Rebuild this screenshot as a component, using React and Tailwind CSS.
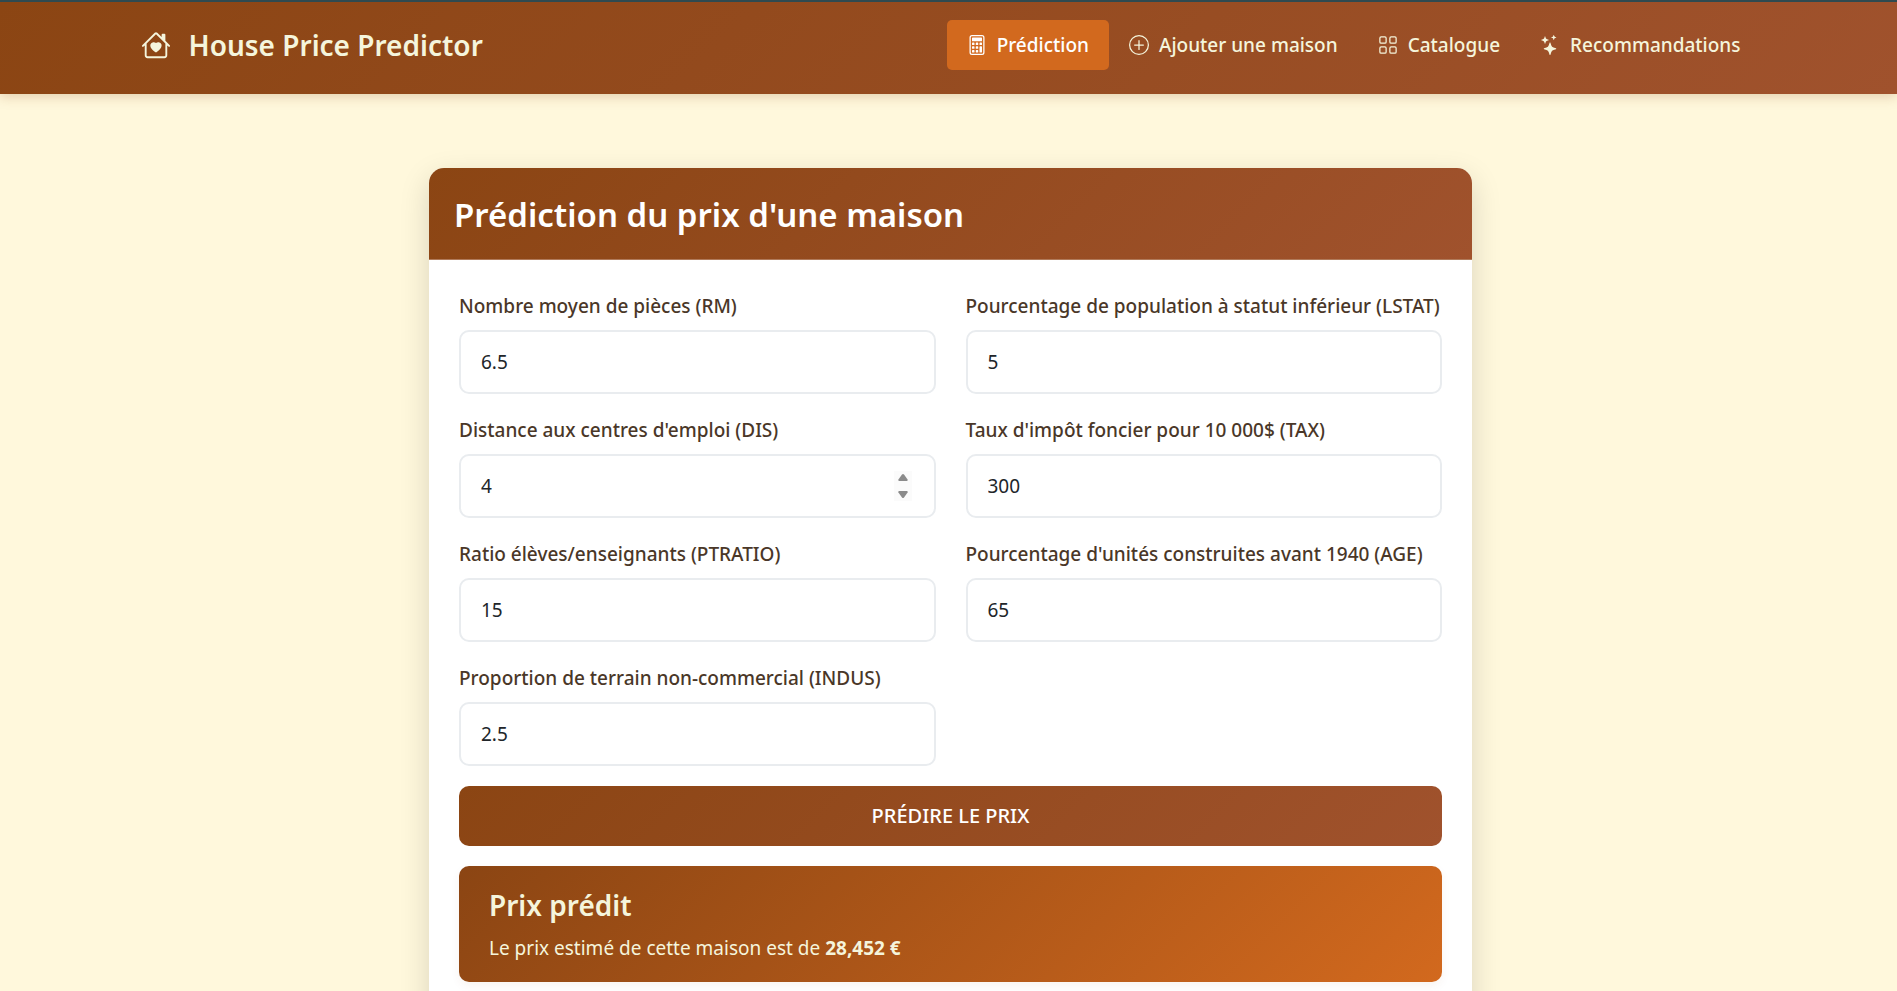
import { useState } from "react";
import { BsHouseHeart, BsCalculator, BsPlusCircle, BsGrid, BsStars } from "react-icons/bs";

const links = [
  { label: "Prédiction", icon: BsCalculator, active: true },
  { label: "Ajouter une maison", icon: BsPlusCircle },
  { label: "Catalogue", icon: BsGrid },
  { label: "Recommandations", icon: BsStars },
];

const fields = [
  { id: "rm", label: "Nombre moyen de pièces (RM)", value: "6.5" },
  { id: "lstat", label: "Pourcentage de population à statut inférieur (LSTAT)", value: "5" },
  { id: "dis", label: "Distance aux centres d'emploi (DIS)", value: "4", stepper: true },
  { id: "tax", label: "Taux d'impôt foncier pour 10 000$ (TAX)", value: "300" },
  { id: "ptratio", label: "Ratio élèves/enseignants (PTRATIO)", value: "15" },
  { id: "age", label: "Pourcentage d'unités construites avant 1940 (AGE)", value: "65" },
  { id: "indus", label: "Proportion de terrain non-commercial (INDUS)", value: "2.5" },
];

function Header() {
  return (
    <header className="border-t-2 border-[#2f4a50] bg-[linear-gradient(135deg,#8b4513,#a0522d)] pl-1 shadow-[0_2px_12px_rgba(139,69,19,0.25)]">
      <div className="mx-auto flex h-[92px] max-w-[1620px] items-center justify-between pb-1.5">
        <a href="#accueil" className="flex items-center gap-[18px] text-[28px] font-semibold text-[#f5f5dc]">
          <BsHouseHeart className="size-[30px]" aria-hidden="true" />
          House Price Predictor
        </a>
        <nav className="flex items-center">
          {links.map(({ label, icon: Icon, active }) => (
            <a
              key={label}
              href={"#" + label.toLowerCase()}
              aria-current={active ? "page" : undefined}
              className={
                "flex h-[50px] items-center gap-2.5 rounded-[5px] px-5 text-[19px] font-medium " +
                (active ? "bg-[#d2691e] text-white" : "text-[#f5f5dc]")
              }
            >
              <Icon className="size-5" aria-hidden="true" />
              {label}
            </a>
          ))}
        </nav>
      </div>
    </header>
  );
}

function Field({ id, label, value, stepper }) {
  const [current, setCurrent] = useState(value);
  const step = (delta) => setCurrent((v) => String(Number(v) + delta));
  return (
    <div className="flex flex-col gap-[9px]">
      <label htmlFor={id} className="text-[19px] leading-[30px] font-medium text-[#4a3728]">
        {label}
      </label>
      <div className="flex h-16 items-center rounded-[10px] border-2 border-[#e9ecef] bg-white pr-[22px] pl-5">
        <input
          id={id}
          type="number"
          step="any"
          value={current}
          onChange={(e) => setCurrent(e.target.value)}
          className="min-w-0 flex-1 appearance-none bg-transparent text-[19px] text-[#212529] outline-none [-moz-appearance:textfield] [&::-webkit-inner-spin-button]:appearance-none"
        />
        {stepper && (
          <div className="flex flex-col bg-[#fbfbfb]">
            <button type="button" aria-label="Augmenter" onClick={() => step(1)} className="flex h-[15px] w-[18px] items-start justify-center pt-[3px]">
              <svg viewBox="0 0 10 7" className="h-[7px] w-2.5" aria-hidden="true">
                <path d="M4 .6Q5-.5 6 .6L9.6 5.4Q10 7 8.8 7H1.2Q0 7 .4 5.4Z" fill="#8b8b8b" />
              </svg>
            </button>
            <button type="button" aria-label="Diminuer" onClick={() => step(-1)} className="flex h-[15px] w-[18px] items-end justify-center pb-[3px]">
              <svg viewBox="0 0 10 7" className="h-[7px] w-2.5" aria-hidden="true">
                <path d="M4 6.4Q5 7.5 6 6.4L9.6 1.6Q10 0 8.8 0H1.2Q0 0 .4 1.6Z" fill="#8b8b8b" />
              </svg>
            </button>
          </div>
        )}
      </div>
    </div>
  );
}

export default function App() {
  return (
    <div className="min-h-screen bg-[#fff8dc] font-['Noto_Sans','Open_Sans',sans-serif]">
      <Header />
      <main className="pt-[74px] pl-1">
        <section className="mx-auto max-w-[1043px] overflow-hidden rounded-t-[15px] bg-white shadow-[0_10px_30px_rgba(0,0,0,0.15)]">
          <h1 className="border-b border-[#b07a5a] bg-[linear-gradient(135deg,#8b4513,#a0522d)] px-[25px] pt-[25px] pb-[22px] text-[33px] leading-[44px] font-semibold text-white">
            Prédiction du prix d'une maison
          </h1>
          <form className="px-[30px] pt-[31px] pb-[30px]" onSubmit={(e) => e.preventDefault()}>
            <div className="grid grid-cols-2 gap-x-[30px] gap-y-[21px]">
              {fields.map((f) => (
                <Field key={f.id} {...f} />
              ))}
            </div>
            <button
              type="submit"
              className="mt-5 h-[60px] w-full rounded-[10px] bg-[linear-gradient(135deg,#8b4513,#a0522d)] text-xl font-medium text-white uppercase"
            >
              Prédire le prix
            </button>
            <output className="mt-5 block rounded-[10px] bg-[linear-gradient(135deg,#8b4513,#d2691e)] px-[30px] py-[19px] text-[#f5f5dc] shadow-[0_4px_10px_rgba(139,69,19,0.06)]">
              <h2 className="mb-2 text-[28px] leading-10 font-semibold">Prix prédit</h2>
              <p className="text-[19px] leading-[30px]">
                Le prix estimé de cette maison est de <strong className="font-bold">28,452 €</strong>
              </p>
            </output>
          </form>
        </section>
      </main>
    </div>
  );
}
